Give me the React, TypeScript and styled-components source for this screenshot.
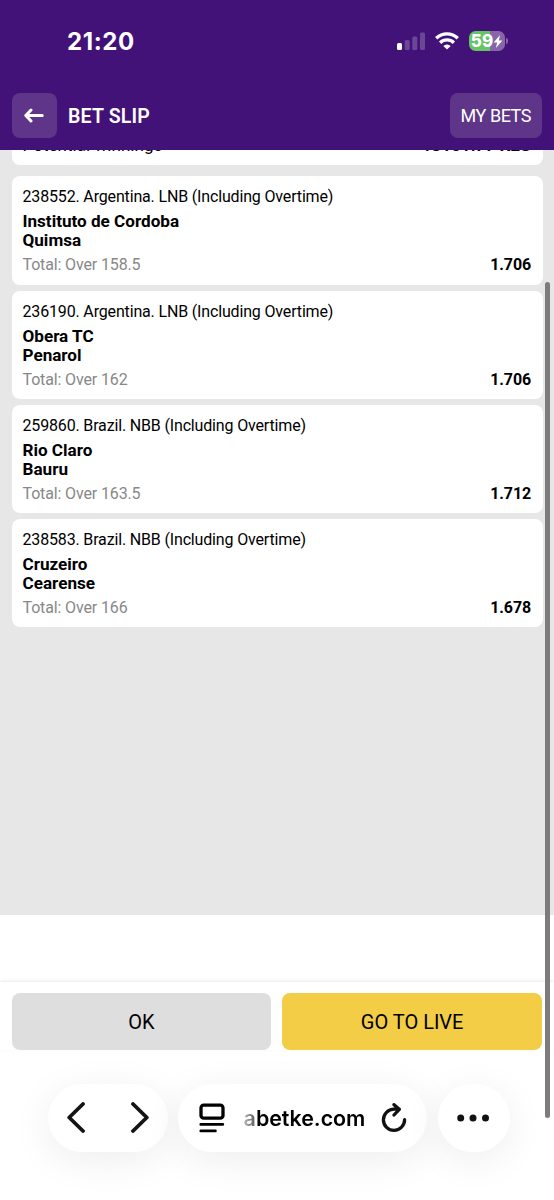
import React from "react";
import styled, { createGlobalStyle } from "styled-components";

const GlobalStyle = createGlobalStyle`
  * { box-sizing: border-box; }
  body { margin: 0; background: #fff; font-family: Roboto, "Liberation Sans", sans-serif; color: #000; }
  button { font: inherit; border: 0; padding: 0; margin: 0; color: inherit; }
`;

const Screen = styled.div`
  position: relative;
  width: 554px;
  height: 1200px;
  overflow: hidden;
  display: flex;
  flex-direction: column;
  background: #fff;
`;

const Header = styled.header`
  position: relative;
  z-index: 1;
  flex: none;
  height: 149.5px;
  background: #431279;
  color: #fff;
`;

const StatusBar = styled.div`
  height: 93px;
  padding: 0 46.5px 11px 67px;
  display: flex;
  align-items: center;
  justify-content: space-between;
`;

const Clock = styled.span`
  padding-top: 1px;
  font: 700 24px/28px Inter, sans-serif;
  letter-spacing: 0.6px;
`;

const StatusIcons = styled.div`
  display: flex;
  align-items: center;
  gap: 10px;
  svg { display: block; }
`;

const Battery = styled.div`
  display: flex;
  align-items: center;
  gap: 1px;
`;

const BatteryBody = styled.div`
  width: 36px;
  height: 20px;
  border-radius: 6.5px;
  display: flex;
  align-items: center;
  justify-content: center;
  background: linear-gradient(90deg, #65c466 59%, #8666a8 59%);
  font: 800 17px/20px Inter, sans-serif;
`;

const BatteryCap = styled.i`
  width: 1.5px;
  height: 6px;
  border-radius: 0 2px 2px 0;
  background: #8666a8;
`;

const NavRow = styled.div`
  display: flex;
  align-items: center;
  padding: 0 12px 0 11.5px;
`;

const HeaderButton = styled.button<{ $width: number }>`
  width: ${(p) => p.$width}px;
  height: 45px;
  border-radius: 8px;
  background: #5e3589;
  color: #fff;
  display: flex;
  align-items: center;
  justify-content: center;
  font-size: 18px;
  letter-spacing: -0.45px;
`;

const Title = styled.h1`
  flex: 1;
  margin: 1px 0 0 11px;
  font-size: 19.5px;
  font-weight: 600;
  letter-spacing: 0.2px;
`;

const Slip = styled.main`
  flex: none;
  height: 765px;
  padding: 0 11.5px;
  background: #e7e7e7;
  display: flex;
  flex-direction: column;
  gap: 5.6px;
`;

const Summary = styled.section`
  height: 43px;
  margin: -28px 0 6.4px;
  flex: none;
  padding: 13px 12px 0 11px;
  border-radius: 8px;
  background: #fff;
  display: flex;
  justify-content: space-between;
  font-size: 17.1px;
  line-height: 20px;
`;

const Card = styled.article`
  flex: none;
  height: 108.5px;
  padding: 11px 11.5px 0 11px;
  border-radius: 8px;
  background: #fff;
`;

const League = styled.div`
  font-size: 16px;
  letter-spacing: -0.16px;
  line-height: 20px;
`;

const Teams = styled.div`
  margin-top: 5px;
  font-size: 17.1px;
  line-height: 19px;
  font-weight: 700;
`;

const PickRow = styled.div`
  margin-top: 5px;
  display: flex;
  justify-content: space-between;
  font-size: 16px;
  letter-spacing: -0.14px;
  line-height: 20px;
  color: #888;
`;

const Odds = styled.b`
  color: #000;
  font-weight: 700;
`;

const Actions = styled.footer`
  margin-top: 67.5px;
  padding: 11px 12px 0 11.5px;
  display: flex;
  gap: 11px;
  box-shadow: 0 -1px 3px rgba(0, 0, 0, 0.09);
`;

const ActionButton = styled.button<{ $color: string }>`
  flex: 1;
  height: 57px;
  border-radius: 8px;
  background: ${(p) => p.$color};
  font-size: 20px;
`;

const BrowserBar = styled.nav`
  margin-top: 34px;
  padding: 0 44px 0 48px;
  display: flex;
  gap: 10.75px;
`;

const Pill = styled.div<{ $width: number; $padding?: string }>`
  width: ${(p) => p.$width}px;
  height: 68px;
  padding: ${(p) => p.$padding ?? "0"};
  border-radius: 34px;
  background: #fff;
  box-shadow: 0 8px 40px rgba(0, 0, 0, 0.07);
  display: flex;
  align-items: center;
  justify-content: space-between;
  svg { display: block; flex: none; }
`;

const Address = styled.span`
  margin-left: 3px;
  font: 600 21.4px/28px Inter, sans-serif;
  background: linear-gradient(90deg, #bbb 0, #666 10px, #000 14px);
  background-clip: text;
  color: transparent;
`;

const ScrollThumb = styled.div`
  position: absolute;
  z-index: 2;
  left: 545px;
  top: 282px;
  width: 4.5px;
  height: 836px;
  border-radius: 3px;
  background: #7c7c7c;
`;

const bets = [
  { league: "238552. Argentina. LNB (Including Overtime)", home: "Instituto de Cordoba", away: "Quimsa", pick: "Total: Over 158.5", odds: "1.706" },
  { league: "236190. Argentina. LNB (Including Overtime)", home: "Obera TC", away: "Penarol", pick: "Total: Over 162", odds: "1.706" },
  { league: "259860. Brazil. NBB (Including Overtime)", home: "Rio Claro", away: "Bauru", pick: "Total: Over 163.5", odds: "1.712" },
  { league: "238583. Brazil. NBB (Including Overtime)", home: "Cruzeiro", away: "Cearense", pick: "Total: Over 166", odds: "1.678" },
];

const SignalIcon = () => (
  <svg width="28" height="19" viewBox="0 0 28 19" fill="#fff">
    <rect x="0" y="11" width="5" height="7" rx="1.5" />
    <g opacity=".22">
      <rect x="7.7" y="8" width="5" height="10" rx="1.5" />
      <rect x="15.3" y="4.5" width="5" height="13.5" rx="1.5" />
      <rect x="23" y="0.5" width="5" height="17.5" rx="1.5" />
    </g>
  </svg>
);

const WifiIcon = () => (
  <svg width="24" height="18" viewBox="0 0 24 18" fill="none" stroke="#fff" strokeWidth="3.3">
    <path d="M1.2 6.3a15.6 15.6 0 0 1 21.6 0" />
    <path d="M5.1 10.7a10 10 0 0 1 13.8 0" />
    <path d="M8.3 13.9a5.3 5.3 0 0 1 7.4 0L12 17.6z" fill="#fff" stroke="none" />
  </svg>
);

const BoltIcon = () => (
  <svg width="10" height="13" viewBox="0 0 9 13" fill="#fff">
    <path d="M6.6 0 .1 7.4h3.6L2.4 13 8.9 5.4H5.3z" />
  </svg>
);

const BackArrow = () => (
  <svg width="20" height="15" viewBox="0 0 20 15" fill="none" stroke="#fff" strokeWidth="3" strokeLinecap="round" strokeLinejoin="round">
    <path d="M2.2 7.5H18.2M7 2 1.8 7.5 7 13" />
  </svg>
);

const Chevron = ({ d }: { d: string }) => (
  <svg width="18" height="31" viewBox="0 0 18 31" fill="none" stroke="#141414" strokeWidth="3.8" strokeLinecap="round" strokeLinejoin="round">
    <path d={d} />
  </svg>
);

const ReaderIcon = () => (
  <svg width="26" height="30" viewBox="0 0 26 30" fill="none" stroke="#000" strokeLinecap="round">
    <rect x="2" y="2.2" width="22" height="13" rx="2.8" strokeWidth="3.3" />
    <path d="M1.8 21.4H23.8M1.8 27.9H16.4" strokeWidth="2.8" />
  </svg>
);

const ReloadIcon = () => (
  <svg width="26" height="30" viewBox="0 0 26 30" fill="none" stroke="#111" strokeWidth="3.3" strokeLinecap="round" strokeLinejoin="round">
    <path d="M23.6 16.6A10.6 10.6 0 1 1 13 6.2H17.8M13 1.7 18.3 6.3 13 12" />
  </svg>
);

const MoreIcon = () => (
  <svg width="32" height="8" viewBox="0 0 32 8" fill="#111">
    <circle cx="3.7" cy="4" r="3.5" />
    <circle cx="16" cy="4" r="3.5" />
    <circle cx="28.5" cy="4" r="3.5" />
  </svg>
);

export default function App() {
  return (
    <Screen>
      <GlobalStyle />
      <Header>
        <StatusBar>
          <Clock>21:20</Clock>
          <StatusIcons>
            <SignalIcon />
            <WifiIcon />
            <Battery>
              <BatteryBody>59<BoltIcon /></BatteryBody>
              <BatteryCap />
            </Battery>
          </StatusIcons>
        </StatusBar>
        <NavRow>
          <HeaderButton $width={45.5} aria-label="Back"><BackArrow /></HeaderButton>
          <Title>BET SLIP</Title>
          <HeaderButton $width={92.5}>MY BETS</HeaderButton>
        </NavRow>
      </Header>
      <Slip>
        <Summary>
          <span>Potential winnings</span>
          <Odds>13151.77 KES</Odds>
        </Summary>
        {bets.map((b) => (
          <Card key={b.league}>
            <League>{b.league}</League>
            <Teams>{b.home}<br />{b.away}</Teams>
            <PickRow><span>{b.pick}</span><Odds>{b.odds}</Odds></PickRow>
          </Card>
        ))}
      </Slip>
      <Actions>
        <ActionButton $color="#dedede">OK</ActionButton>
        <ActionButton $color="#f2cd45">GO TO LIVE</ActionButton>
      </Actions>
      <BrowserBar>
        <Pill $width={119.5} $padding="0 18.5px 1px">
          <Chevron d="M16 2 2.2 15.5 16 29" />
          <Chevron d="M2 2 15.8 15.5 2 29" />
        </Pill>
        <Pill $width={249} $padding="0 20px 0 20.5px">
          <ReaderIcon />
          <Address>abetke.com</Address>
          <ReloadIcon />
        </Pill>
        <Pill $width={71.5} $padding="0 20px 1px 19px"><MoreIcon /></Pill>
      </BrowserBar>
      <ScrollThumb />
    </Screen>
  );
}
